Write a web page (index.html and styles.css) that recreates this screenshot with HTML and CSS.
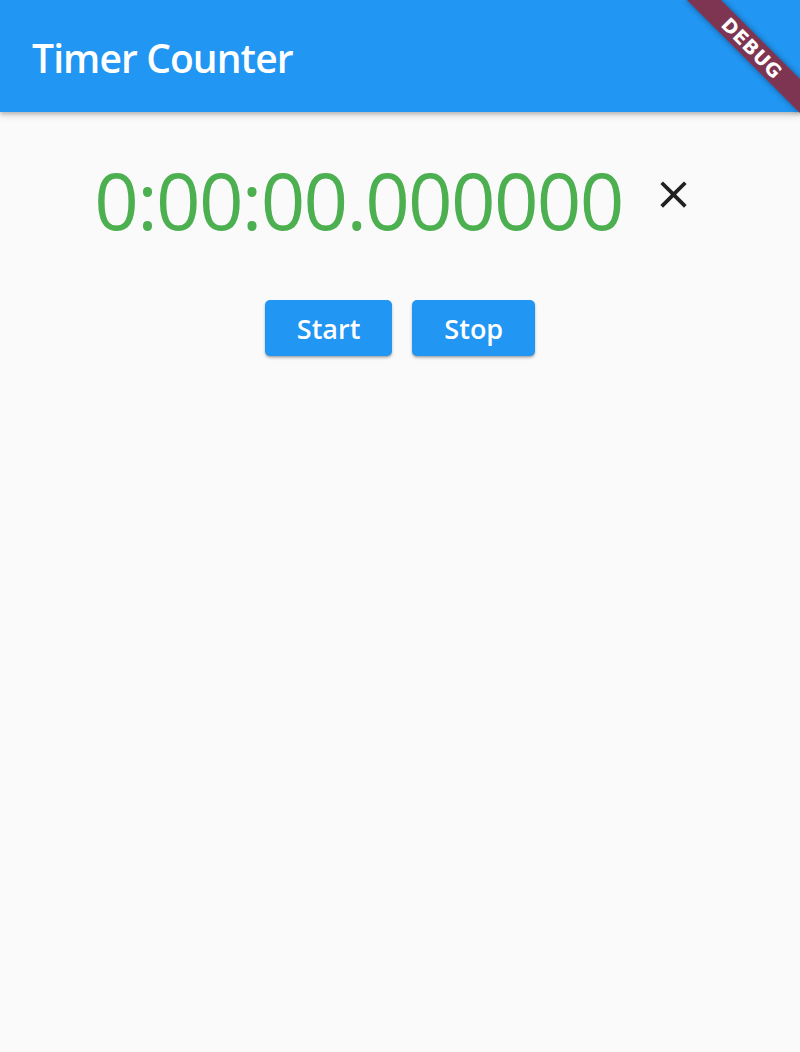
FILE: index.html
```html
<!DOCTYPE html>
<html>
<head>
<meta charset="utf-8">
<link rel="stylesheet" href="styles.css">
</head>
<body>
<div class="app">
  <header class="appbar">
    <h1 class="title">Timer Counter</h1>
  </header>
  <main class="content">
    <div class="timer-row">
      <span class="timer">0:00:00.000000</span>
      <svg class="close" viewBox="0 0 24 24" width="45" height="45"><path fill="#212121" d="M19 6.41L17.59 5 12 10.59 6.41 5 5 6.41 10.59 12 5 17.59 6.41 19 12 13.41 17.59 19 19 17.59 13.41 12z"/></svg>
    </div>
    <div class="buttons">
      <button class="btn">Start</button>
      <button class="btn">Stop</button>
    </div>
  </main>
  <div class="debug-banner"><span>DEBUG</span></div>
</div>
</body>
</html>
```
FILE: styles.css
```css
html, body {
  margin: 0;
  padding: 0;
}
body {
  background: #fafafa;
  font-family: "Open Sans", "Noto Sans", sans-serif;
  width: 800px;
  height: 1052px;
  overflow: hidden;
}
.app {
  position: relative;
  width: 800px;
  height: 1052px;
  overflow: hidden;
}
.appbar {
  height: 112px;
  background: #2196f3;
  display: flex;
  align-items: center;
  padding: 0 32px;
  box-shadow: 0 2px 4px rgba(0,0,0,0.22), 0 4px 8px rgba(0,0,0,0.10);
  position: relative;
  z-index: 1;
}
.title {
  margin: 0;
  color: #fff;
  font-size: 39px;
  font-weight: 600;
  letter-spacing: -0.9px;
  line-height: 1;
  padding-top: 3px;
}
.content {
  display: flex;
  flex-direction: column;
  align-items: center;
}
.timer-row {
  display: flex;
  align-items: center;
  gap: 28px;
  margin-top: 37px;
  height: 100px;
  padding-right: 10px;
}
.timer {
  color: #4caf50;
  font-size: 78px;
  letter-spacing: -1.7px;
  line-height: 100px;
  padding-top: 2px;
}
.close {
  display: block;
  margin-top: -10px;
}
.buttons {
  display: flex;
  gap: 20px;
  margin-top: 51px;
}
.btn {
  height: 56px;
  border: none;
  border-radius: 5px;
  background: #2196f3;
  color: #fff;
  font-family: "Open Sans", "Noto Sans", sans-serif;
  font-size: 27px;
  font-weight: 600;
  padding: 0 32px;
  box-shadow: 0 2px 3px rgba(0,0,0,0.25), 0 1px 1px rgba(0,0,0,0.12);
}
.debug-banner {
  position: absolute;
  left: 672px;
  top: 36px;
  width: 160px;
  height: 24px;
  background: #7e3552;
  transform: rotate(45deg);
  display: flex;
  align-items: center;
  justify-content: center;
  box-shadow: 0 0 6px rgba(0,0,0,0.4);
  z-index: 2;
}
.debug-banner span {
  color: #fff;
  font-family: "DejaVu Sans", sans-serif;
  font-weight: 900;
  font-size: 19px;
  line-height: 1;
  letter-spacing: 0.5px;
}
```
